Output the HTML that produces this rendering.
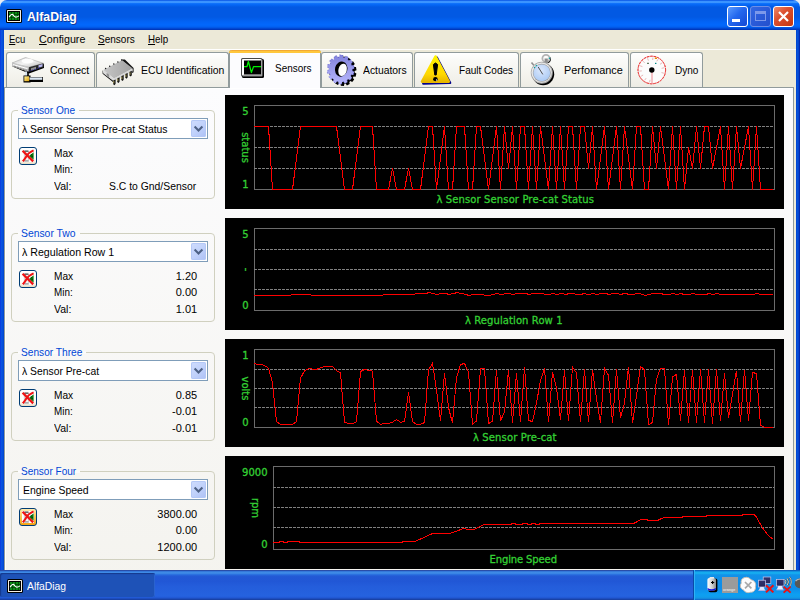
<!DOCTYPE html><html><head><meta charset="utf-8"><title>AlfaDiag</title><style>
*{box-sizing:border-box;margin:0;padding:0}
html,body{width:800px;height:600px;overflow:hidden;background:#ece9d8;font-family:"Liberation Sans",sans-serif;font-size:11px;color:#000}
.abs{position:absolute}
.t{position:absolute;white-space:nowrap;line-height:20px;height:20px;transform-origin:0 50%;display:block}
#title{position:absolute;left:0;top:0;width:800px;height:30px;border-radius:7px 7px 0 0;background:linear-gradient(to bottom,#0046dc 0,#2a84fc 1px,#3d96ff 1.6px,#3a94ff 2.6px,#0a6efa 3.6px,#0466f4 5px,#0259e3 7px,#0259e3 17px,#0264f6 22px,#0268fc 25px,#0260f0 27px,#0046d0 28.6px,#0030b0 30px)}
#corner{position:absolute;left:0;top:0;width:800px;height:8px;background:#e8ecf4}
#lframe{position:absolute;left:0;top:30px;width:4px;height:570px;background:linear-gradient(to right,#0831d9 0,#0c4fe6 1px,#0855dd 2px,#0043cf 4px)}
#rframe{position:absolute;left:796px;top:30px;width:4px;height:570px;background:linear-gradient(to right,#0043cf 0,#0855dd 2px,#0436c0 3px,#001ea0 4px)}
#menubar{position:absolute;left:4px;top:30px;width:792px;height:19px;background:#ece9d8}
#mline{position:absolute;left:4px;top:49px;width:792px;height:1px;background:#fff}
.tab{position:absolute;top:52px;height:36px;border:1px solid #919b9c;border-bottom:none;border-radius:3px 3px 0 0;background:linear-gradient(to bottom,#ffffff 0,#fafaf7 20%,#f3f2ec 70%,#ecebe4 100%);z-index:1}
.tab.sel{top:50px;height:38px;background:#fcfcfe;border-top:none;z-index:3}
.tab.sel:before{content:"";position:absolute;left:-1px;right:-1px;top:0;height:3px;background:linear-gradient(to bottom,#e68b2c 0,#ffc73c 1px,#ffc73c 100%);border-radius:3px 3px 0 0}
#pane{position:absolute;left:4px;top:87px;width:790px;height:520px;border:1px solid #919b9c;box-shadow:inset 1px 1px 0 #fff;background:linear-gradient(to bottom,#fcfcfe 0,#f4f3ee 100%);z-index:2}
.grp{position:absolute;left:11px;width:204px;height:89px;border:1px solid #d0d0bf;border-radius:4px;z-index:4}
.lgbg{position:absolute;z-index:5;height:3px}
.combo{position:absolute;left:18px;width:190px;height:21px;border:1px solid #7f9db9;background:#fff;z-index:5}
.dd{position:absolute;left:191px;width:15px;height:17px;border-radius:2px;background:linear-gradient(135deg,#cfdcfd 0,#c1d2fb 50%,#adc0f5 100%);box-shadow:inset 0 0 0 1px #b4c8f6;z-index:6}
.btn{position:absolute;left:19px;width:18px;height:18px;border:1px solid #003c74;border-radius:3px;background:linear-gradient(to bottom,#fff 0,#fdfcf8 70%,#efe8d6 92%,#e6dcc4 100%);z-index:5}
.chart{position:absolute;left:225px;width:559px;background:#000;z-index:4}
#taskbar{position:absolute;left:0;top:570px;width:800px;height:30px;z-index:10;background:linear-gradient(to bottom,#1f2f86 0,#3165c4 3%,#3682e5 6%,#4490e6 10%,#3883e5 12%,#2b71e0 15%,#2663da 18%,#235bd6 20%,#2258d5 23%,#2157d6 38%,#245ddb 54%,#2562df 86%,#245fdc 89%,#2158d4 92%,#1d4ec0 95%,#1941a5 98%)}
#tbtn{position:absolute;left:0;top:3px;width:155px;height:24px;border-radius:2px;background:#1e52b7;box-shadow:inset 1px 1px 1px #15398c, inset -1px 0 0 #2a63cf}
#tray{position:absolute;left:693px;top:0;width:107px;height:30px;background:linear-gradient(to bottom,#0c59b9 1%,#139ee9 6%,#18b5f2 10%,#139beb 14%,#1290e8 19%,#0d8dea 63%,#0d9ff1 81%,#0f9eed 88%,#119be9 91%,#1392e2 94%,#137ed7 97%,#095bc9 100%);border-left:1px solid #0a4aa8;box-shadow:inset 1px 0 0 #2fb2f5}
.cb{position:absolute;top:6px;width:21px;height:21px;border:1px solid #fff;border-radius:3px}
</style></head><body><div id="corner"></div><div id="title"></div><div id="lframe"></div><div id="rframe"></div><span class="t" style="left:26.50px;top:7px;font-size:13.5px;color:#fff;z-index:6;transform:scaleX(0.9081);text-shadow:1px 1px 0 #0f3a9c;font-weight:bold;">AlfaDiag</span><div class="cb" style="left:727px;background:linear-gradient(135deg,#5c9cff 0,#2468ee 45%,#1448d4 100%)"><div class="abs" style="left:4px;top:12px;width:8px;height:3px;background:#fff"></div></div><div class="cb" style="left:750px;border-color:#6e8ee6;background:linear-gradient(135deg,#3468e2 0,#2a5ad8 50%,#2450cc 100%)"><div class="abs" style="left:4px;top:4px;width:11px;height:10px;border:1px solid #7c98ea;border-top-width:3px"></div></div><div class="cb" style="left:773px;background:linear-gradient(135deg,#ee8a6a 0,#dc5030 40%,#c4360e 100%)"><svg class="abs" style="left:0;top:0" width="19" height="19" viewBox="0 0 19 19"><path d="M5 5 L14 14 M14 5 L5 14" stroke="#fff" stroke-width="2.2"/></svg></div><svg class="abs" style="left:4px;top:6px;z-index:6" width="22" height="20" viewBox="4 6 22 20" ><g transform="translate(6,9)"><rect x="0" y="0" width="16" height="14" rx="1.5" fill="#000"/><rect x="1" y="1" width="14" height="12" rx="0.5" fill="#f4efe4"/><rect x="2" y="2" width="12" height="10" fill="#000"/><rect x="3" y="3" width="10" height="8" fill="#0a8a14"/><path d="M3 5.5H13 M3 8.5H13 M5.5 3V11 M8.5 3V11 M11.5 3V11" stroke="#003c00" stroke-width="1" fill="none" opacity=".75"/><path d="M3.2 8.2 C4.5 5.2 6.5 4.6 7.6 6.6 C8.6 8.4 10.5 8.8 12.8 6.8" stroke="#fff" stroke-width="1.1" fill="none"/></g></svg><div id="menubar"></div><div id="mline"></div><span class="t" style="left:9.40px;top:29px;font-size:11px;color:#000;z-index:6;transform:scaleX(0.8600);"><u>E</u>cu</span><span class="t" style="left:38.75px;top:29px;font-size:11px;color:#000;z-index:6;transform:scaleX(0.9721);"><u>C</u>onfigure</span><span class="t" style="left:97.75px;top:29px;font-size:11px;color:#000;z-index:6;transform:scaleX(0.9118);"><u>S</u>ensors</span><span class="t" style="left:148.10px;top:29px;font-size:11px;color:#000;z-index:6;transform:scaleX(0.8887);"><u>H</u>elp</span><div class="tab" style="left:6px;width:89px"></div><div class="tab" style="left:96px;width:133px"></div><div class="tab sel" style="left:229px;width:92px"></div><div class="tab" style="left:321px;width:92px"></div><div class="tab" style="left:414px;width:105px"></div><div class="tab" style="left:520px;width:109px"></div><div class="tab" style="left:630px;width:73px"></div><span class="t" style="left:49.75px;top:60px;font-size:11px;color:#000;z-index:6;transform:scaleX(0.9593);">Connect</span><span class="t" style="left:140.60px;top:60px;font-size:11px;color:#000;z-index:6;transform:scaleX(0.9457);">ECU Identification</span><span class="t" style="left:275.25px;top:58px;font-size:11px;color:#000;z-index:6;transform:scaleX(0.9057);">Sensors</span><span class="t" style="left:363.10px;top:60px;font-size:11px;color:#000;z-index:6;transform:scaleX(0.9401);">Actuators</span><span class="t" style="left:458.50px;top:60px;font-size:11px;color:#000;z-index:6;transform:scaleX(0.9129);">Fault Codes</span><span class="t" style="left:564.40px;top:60px;font-size:11px;color:#000;z-index:6;transform:scaleX(0.9917);">Perfomance</span><span class="t" style="left:674.75px;top:60px;font-size:11px;color:#000;z-index:6;transform:scaleX(0.9135);">Dyno</span><div id="pane"></div><svg class="abs" style="left:8px;top:54px;z-index:6" width="40" height="32" viewBox="8 54 40 32" ><defs><linearGradient id="dg1" x1="0" y1="0" x2="1" y2="1"><stop offset="0" stop-color="#c8c8c8"/><stop offset=".5" stop-color="#f4f4f4"/><stop offset="1" stop-color="#b8b8b8"/></linearGradient>
<linearGradient id="yg" x1="0" y1="0" x2="1" y2="1"><stop offset="0" stop-color="#fff2a0"/><stop offset="1" stop-color="#e0a000"/></linearGradient></defs>
<path d="M12.5 66.5 L29 73.5 L44 68 L44 64 L29 69 L12.5 63.5Z" fill="#000"/>
<path d="M12 63 L25.5 57.5 L43.5 63.3 L28.8 67.2Z" fill="url(#dg1)" stroke="#9a9a9a" stroke-width=".5"/>
<ellipse cx="27.5" cy="61" rx="6" ry="2.6" fill="#fff" opacity=".9"/>
<path d="M12 63 L28.8 67.2 L28.8 72 L12 66.3Z" fill="#c4c4c4"/>
<path d="M13 64.6 L27.5 68.6" stroke="#fff" stroke-width="1"/>
<path d="M14 66.2 L27 70.4" stroke="#6a6a6a" stroke-width=".8" stroke-dasharray="2 1"/>
<path d="M28.8 67.2 L43.5 63.3 L43.5 67.2 L28.8 72Z" fill="#2a2a2a"/>
<path d="M31 68.2 L36 66.8 L36 69.2 L31 70.6Z" fill="#909090"/>
<path d="M38.5 65.2 L42.5 64 L42.5 66.6 L38.5 67.8Z" fill="#b8b8f0"/>
<path d="M29.5 71 L41 67.4" stroke="#1818c0" stroke-width=".8" stroke-dasharray="1 1.5"/>
<rect x="25" y="71.5" width="2.2" height="5" fill="#d8e4f0"/><rect x="27.2" y="71.5" width="1.6" height="5" fill="#000"/>
<rect x="23.5" y="75.5" width="7" height="7" fill="#000"/>
<rect x="24.3" y="76.3" width="4.9" height="4.9" fill="url(#yg)"/>
<rect x="30" y="77" width="13" height="5" fill="#000"/>
<rect x="29.5" y="77.4" width="12.8" height="2.4" fill="#dce8f4"/></svg><svg class="abs" style="left:98px;top:54px;z-index:6" width="40" height="32" viewBox="98 54 40 32" ><defs><linearGradient id="cg" x1="0" y1="0" x2="1" y2="0"><stop offset="0" stop-color="#c6c6c6"/><stop offset="1" stop-color="#a2a2a2"/></linearGradient></defs>
<path d="M121.3 59.4 L124.9 59.4 L133.6 68 L133.6 72.2 L132 73 L132.2 69 L122 60.6Z" fill="#141414"/>
<path d="M102.6 70 L102.6 73.8 L113.6 82.4 L114.2 81 L103.6 73Z" fill="#141414"/>
<path d="M103.2 70 L122 60.2 L132.7 68.6 L114 78.5Z" fill="url(#cg)"/>
<path d="M103.2 70 L114 78.5 L114 81.6 L103.2 73.3Z" fill="#dadada"/>
<path d="M106.6 72.7 L109.2 74.7 L109.2 77.4 L106.6 75.3Z" fill="#8e8e8e"/>
<path d="M114 78.5 L132.7 68.6 L132.7 71.2 L114 81.4Z" fill="#d6d6d6"/>
<path d="M113.2 80.6 L115.6 79.4 L115.6 83.8 L114.6 85.2 L113.2 84.2Z" fill="#141414"/><path d="M117.2 78.4 L119.6 77.2 L119.6 81.6 L118.6 83.0 L117.2 82.0Z" fill="#141414"/><path d="M121.3 76.3 L123.7 75.1 L123.7 79.5 L122.7 80.9 L121.3 79.9Z" fill="#141414"/><path d="M125.3 74.1 L127.7 72.9 L127.7 77.3 L126.7 78.7 L125.3 77.7Z" fill="#141414"/><path d="M129.4 72.0 L131.8 70.8 L131.8 75.2 L130.8 76.6 L129.4 75.6Z" fill="#141414"/><path d="M113.8 80.9 V83.4" stroke="#e0d070" stroke-width=".7"/><path d="M117.8 78.7 V81.2" stroke="#e0d070" stroke-width=".7"/><path d="M121.9 76.6 V79.1" stroke="#e0d070" stroke-width=".7"/><path d="M125.9 74.4 V76.9" stroke="#e0d070" stroke-width=".7"/><path d="M130.0 72.3 V74.8" stroke="#e0d070" stroke-width=".7"/>
<g fill="#202020"><circle cx="105.6" cy="68.4" r=".75"/><circle cx="109.7" cy="66.2" r=".75"/><circle cx="113.8" cy="64.1" r=".75"/><circle cx="117.9" cy="62" r=".75"/><circle cx="121.6" cy="60" r=".75"/></g></svg><svg class="abs" style="left:236px;top:54px;z-index:6" width="34" height="30" viewBox="236 54 34 30" ><rect x="242" y="59" width="22" height="19" rx="1.5" fill="#000"/>
<rect x="241" y="58" width="21.5" height="18.5" rx="1.5" fill="#484848"/>
<rect x="242" y="59" width="19.5" height="16.5" rx="1" fill="#fff"/>
<path d="M243 75.5 H261.5 V60" stroke="#a0a0a0" stroke-width="1.6" fill="none"/>
<rect x="244" y="60.5" width="17" height="14" fill="#000"/>
<path d="M244 66.5 H247 L248.4 61.5 L251.4 72.5 L253.6 66.5 H261" stroke="#00f000" stroke-width="1.25" fill="none" stroke-linejoin="round"/></svg><svg class="abs" style="left:322px;top:52px;z-index:6" width="40" height="36" viewBox="322 52 40 36" ><defs><linearGradient id="gg" x1="0" y1="0" x2="0" y2="1"><stop offset="0" stop-color="#8282dc"/><stop offset="1" stop-color="#b6b6fc"/></linearGradient></defs><path d="M354.6 72.6 L356.4 73.6 L355.6 76.7 L353.5 76.6 L352.9 77.9 L354.2 79.6 L352.2 82.1 L350.4 81.0 L349.3 81.9 L349.7 84.1 L346.9 85.4 L345.7 83.5 L344.4 83.8 L343.9 86.0 L340.8 85.8 L340.5 83.6 L339.2 83.2 L337.9 85.0 L335.2 83.4 L335.7 81.3 L334.7 80.3 L332.8 81.3 L331.0 78.6 L332.4 77.0 L331.9 75.6 L329.8 75.6 L329.3 72.3 L331.2 71.5 L331.2 70.0 L329.4 69.0 L330.2 65.9 L332.3 66.0 L332.9 64.7 L331.6 63.0 L333.6 60.5 L335.4 61.6 L336.5 60.7 L336.1 58.5 L338.9 57.2 L340.1 59.1 L341.4 58.8 L341.9 56.6 L345.0 56.8 L345.3 59.0 L346.6 59.4 L347.9 57.6 L350.6 59.2 L350.1 61.3 L351.1 62.3 L353.0 61.3 L354.8 64.0 L353.4 65.6 L353.9 67.0 L356.0 67.0 L356.5 70.3 L354.6 71.1Z" fill="#000"/><path d="M352.4 70.8 L354.2 71.8 L353.4 74.9 L351.3 74.8 L350.7 76.1 L352.0 77.8 L350.0 80.3 L348.2 79.2 L347.1 80.1 L347.5 82.3 L344.7 83.6 L343.5 81.7 L342.2 82.0 L341.7 84.2 L338.6 84.0 L338.3 81.8 L337.0 81.4 L335.7 83.2 L333.0 81.6 L333.5 79.5 L332.5 78.5 L330.6 79.5 L328.8 76.8 L330.2 75.2 L329.7 73.8 L327.6 73.8 L327.1 70.5 L329.0 69.7 L329.0 68.2 L327.2 67.2 L328.0 64.1 L330.1 64.2 L330.7 62.9 L329.4 61.2 L331.4 58.7 L333.2 59.8 L334.3 58.9 L333.9 56.7 L336.7 55.4 L337.9 57.3 L339.2 57.0 L339.7 54.8 L342.8 55.0 L343.1 57.2 L344.4 57.6 L345.7 55.8 L348.4 57.4 L347.9 59.5 L348.9 60.5 L350.8 59.5 L352.6 62.2 L351.2 63.8 L351.7 65.2 L353.8 65.2 L354.3 68.5 L352.4 69.3Z" fill="url(#gg)" stroke="#2020a8" stroke-width=".5" stroke-dasharray="1 2.5"/><ellipse cx="341.2" cy="69.1" rx="6.2" ry="7.6" fill="#000" transform="rotate(14 341.2 69.1)"/><ellipse cx="342.6" cy="69.9" rx="4.2" ry="6.3" fill="#fdfdfd" transform="rotate(14 342.6 69.9)"/></svg><svg class="abs" style="left:416px;top:52px;z-index:6" width="40" height="36" viewBox="416 52 40 36" ><defs><linearGradient id="wg" x1="0" y1="0" x2="0" y2="1"><stop offset="0" stop-color="#fff200"/><stop offset=".7" stop-color="#ffd800"/><stop offset="1" stop-color="#e8b800"/></linearGradient></defs>
<path d="M436.7 57.6 L450 82.8 L423.4 83.4Z" fill="#000088" stroke="#000088" stroke-width="2.6" stroke-linejoin="round"/>
<path d="M435.5 56.5 L448.8 81.6 L422 81.6Z" fill="url(#wg)" stroke="url(#wg)" stroke-width="2.6" stroke-linejoin="round"/>
<path d="M433.4 64.5 Q435.5 61.5 437.6 64.5 L436.2 75 H434.8Z" fill="#000" stroke="#000" stroke-width="1" stroke-linejoin="round"/>
<ellipse cx="435.4" cy="79.2" rx="2.3" ry="2.1" fill="#000"/>
<circle cx="436.6" cy="80" r=".7" fill="#e8e8ff"/></svg><svg class="abs" style="left:524px;top:52px;z-index:6" width="36" height="36" viewBox="524 52 36 36" ><defs><radialGradient id="fg" cx=".45" cy=".35" r=".7"><stop offset="0" stop-color="#dce8fc"/><stop offset="1" stop-color="#a8c8f4"/></radialGradient></defs>
<circle cx="543.2" cy="74.2" r="11" fill="#000"/>
<path d="M549.8 57.5 A3.6 3.6 0 0 1 547.5 62.6" fill="none" stroke="#000" stroke-width="1.6"/>
<circle cx="546" cy="58.4" r="3.6" fill="none" stroke="#b4b4b4" stroke-width="1.8"/>
<rect x="544.6" y="58.5" width="3.2" height="4.5" fill="#8c8c8c"/>
<path d="M531.5 62.5 L534 65.5" stroke="#909090" stroke-width="1.6"/>
<circle cx="541.8" cy="72.8" r="11" fill="#a4a4a4"/>
<circle cx="541.6" cy="72.6" r="10.2" fill="#e8e8e8"/>
<circle cx="541.8" cy="72.8" r="9" fill="#9c9c9c"/>
<circle cx="541.8" cy="72.8" r="8.4" fill="url(#fg)"/>
<path d="M538.2 67 L542.8 74.4" stroke="#505050" stroke-width="1"/>
<circle cx="549.5" cy="58.3" r=".8" fill="#00a0a0"/><circle cx="536.3" cy="65.5" r=".7" fill="#00a0a0"/><circle cx="534.5" cy="67.5" r=".7" fill="#00a0a0"/></svg><svg class="abs" style="left:634px;top:52px;z-index:6" width="36" height="36" viewBox="634 52 36 36" ><circle cx="651.8" cy="70" r="13.8" fill="#fcfcfc" stroke="#e40000" stroke-width="1" stroke-dasharray="2.6 0.9"/><circle cx="651.8" cy="70" r="13.8" fill="none" stroke="#f08080" stroke-width="1" opacity=".5"/><path d="M650.1 79.8L649.6 82.2M646.1 78.2L644.7 80.2M643.1 75.0L641.1 76.2M641.8 70.9L639.4 71.1M642.4 66.6L640.1 65.8M644.7 62.9L643.0 61.2M648.4 60.6L647.6 58.3M652.7 60.0L652.9 57.6M656.8 61.3L658.0 59.3M660.0 64.3L662.0 62.9M661.6 68.3L664.0 67.8M661.5 72.6L663.8 73.2" stroke="#d89090" stroke-width=".9" opacity=".7"/><path d="M652 72 V84" stroke="#ee8890" stroke-width="1"/><circle cx="651.8" cy="70" r="2.7" fill="#000"/><rect x="654.8" y="57.6" width="2.2" height="1.4" fill="#e89000"/><rect x="655" y="62.8" width="1.4" height="1.2" fill="#008888"/><rect x="647" y="62.8" width="2" height="1" fill="#406040"/></svg><div class="grp" style="top:110px"></div><div class="lgbg" style="left:18px;top:109px;width:61px;background:#fbfbfb"></div><span class="t" style="left:21.00px;top:100px;font-size:11px;color:#0046d5;z-index:6;transform:scaleX(0.9218);">Sensor One</span><div class="combo" style="top:118px"></div><div class="dd" style="top:120px"><svg width="16" height="17" viewBox="0 0 16 17" style="position:absolute;left:0;top:0"><path d="M3.6 6.6 L7.5 10.5 L11.4 6.6" fill="none" stroke="#4d6185" stroke-width="2.1"/></svg></div><span class="t" style="left:22.00px;top:119px;font-size:11px;color:#000;z-index:6;transform:scaleX(0.9446);">λ Sensor Sensor Pre-cat Status</span><div class="btn" style="top:147px"><svg width="16" height="16" viewBox="0 0 16 16" style="position:absolute;left:0;top:0"><rect x="2" y="2" width="12" height="12" fill="#fff"/><rect x="4.2" y="3.2" width="4.6" height="10" fill="#f4f4f4" stroke="#b4b4b4" stroke-width=".6"/><path d="M4.4 3.1 H8.4" stroke="#222" stroke-width="1"/><path d="M4.6 12.8 H8.4" stroke="#888" stroke-width=".9"/><path d="M13.6 4.2 L9 8 L13.6 11.8Z" fill="#0a7a10"/><path d="M11.2 6.4 L12.6 9.6" stroke="#032c04" stroke-width="1.1" stroke-dasharray="1 .8"/><path d="M2.6 2.8 L13.2 13.4" stroke="#ee1414" stroke-width="2.3"/><path d="M13.6 2.4 Q8.6 4.6 6.6 8 Q5 10.8 2.8 13.4" stroke="#ee1414" stroke-width="2.1" fill="none"/></svg></div><span class="t" style="left:54.40px;top:143px;font-size:11px;color:#000;z-index:6;transform:scaleX(0.9210);">Max</span><span class="t" style="left:54.40px;top:159px;font-size:11px;color:#000;z-index:6;transform:scaleX(0.8975);">Min:</span><span class="t" style="left:54.00px;top:176px;font-size:11px;color:#000;z-index:6;transform:scaleX(0.9540);">Val:</span><span class="t" style="left:109.30px;top:176px;font-size:11px;color:#000;z-index:6;transform:scaleX(0.9438);">S.C to Gnd/Sensor</span><div class="grp" style="top:233px"></div><div class="lgbg" style="left:18px;top:232px;width:62px;background:#fbfbfb"></div><span class="t" style="left:21.00px;top:223px;font-size:11px;color:#0046d5;z-index:6;transform:scaleX(0.9419);">Sensor Two</span><div class="combo" style="top:241px"></div><div class="dd" style="top:243px"><svg width="16" height="17" viewBox="0 0 16 17" style="position:absolute;left:0;top:0"><path d="M3.6 6.6 L7.5 10.5 L11.4 6.6" fill="none" stroke="#4d6185" stroke-width="2.1"/></svg></div><span class="t" style="left:22.00px;top:242px;font-size:11px;color:#000;z-index:6;transform:scaleX(0.9657);">λ Regulation Row 1</span><div class="btn" style="top:270px"><svg width="16" height="16" viewBox="0 0 16 16" style="position:absolute;left:0;top:0"><rect x="2" y="2" width="12" height="12" fill="#fff"/><rect x="4.2" y="3.2" width="4.6" height="10" fill="#f4f4f4" stroke="#b4b4b4" stroke-width=".6"/><path d="M4.4 3.1 H8.4" stroke="#222" stroke-width="1"/><path d="M4.6 12.8 H8.4" stroke="#888" stroke-width=".9"/><path d="M13.6 4.2 L9 8 L13.6 11.8Z" fill="#0a7a10"/><path d="M11.2 6.4 L12.6 9.6" stroke="#032c04" stroke-width="1.1" stroke-dasharray="1 .8"/><path d="M2.6 2.8 L13.2 13.4" stroke="#ee1414" stroke-width="2.3"/><path d="M13.6 2.4 Q8.6 4.6 6.6 8 Q5 10.8 2.8 13.4" stroke="#ee1414" stroke-width="2.1" fill="none"/></svg></div><span class="t" style="left:54.40px;top:266px;font-size:11px;color:#000;z-index:6;transform:scaleX(0.9210);">Max</span><span class="t" style="left:175.71px;top:266px;font-size:11px;color:#000;z-index:6;">1.20</span><span class="t" style="left:54.40px;top:282px;font-size:11px;color:#000;z-index:6;transform:scaleX(0.8975);">Min:</span><span class="t" style="left:175.71px;top:282px;font-size:11px;color:#000;z-index:6;">0.00</span><span class="t" style="left:54.00px;top:299px;font-size:11px;color:#000;z-index:6;transform:scaleX(0.9540);">Val:</span><span class="t" style="left:175.71px;top:299px;font-size:11px;color:#000;z-index:6;">1.01</span><div class="grp" style="top:352px"></div><div class="lgbg" style="left:18px;top:351px;width:68px;background:#fbfbfb"></div><span class="t" style="left:21.00px;top:342px;font-size:11px;color:#0046d5;z-index:6;transform:scaleX(0.9244);">Sensor Three</span><div class="combo" style="top:360px"></div><div class="dd" style="top:362px"><svg width="16" height="17" viewBox="0 0 16 17" style="position:absolute;left:0;top:0"><path d="M3.6 6.6 L7.5 10.5 L11.4 6.6" fill="none" stroke="#4d6185" stroke-width="2.1"/></svg></div><span class="t" style="left:22.00px;top:361px;font-size:11px;color:#000;z-index:6;transform:scaleX(0.9406);">λ Sensor Pre-cat</span><div class="btn" style="top:389px"><svg width="16" height="16" viewBox="0 0 16 16" style="position:absolute;left:0;top:0"><rect x="2" y="2" width="12" height="12" fill="#fff"/><rect x="4.2" y="3.2" width="4.6" height="10" fill="#f4f4f4" stroke="#b4b4b4" stroke-width=".6"/><path d="M4.4 3.1 H8.4" stroke="#222" stroke-width="1"/><path d="M4.6 12.8 H8.4" stroke="#888" stroke-width=".9"/><path d="M13.6 4.2 L9 8 L13.6 11.8Z" fill="#0a7a10"/><path d="M11.2 6.4 L12.6 9.6" stroke="#032c04" stroke-width="1.1" stroke-dasharray="1 .8"/><path d="M2.6 2.8 L13.2 13.4" stroke="#ee1414" stroke-width="2.3"/><path d="M13.6 2.4 Q8.6 4.6 6.6 8 Q5 10.8 2.8 13.4" stroke="#ee1414" stroke-width="2.1" fill="none"/></svg></div><span class="t" style="left:54.40px;top:385px;font-size:11px;color:#000;z-index:6;transform:scaleX(0.9210);">Max</span><span class="t" style="left:175.71px;top:385px;font-size:11px;color:#000;z-index:6;">0.85</span><span class="t" style="left:54.40px;top:401px;font-size:11px;color:#000;z-index:6;transform:scaleX(0.8975);">Min:</span><span class="t" style="left:172.05px;top:401px;font-size:11px;color:#000;z-index:6;">-0.01</span><span class="t" style="left:54.00px;top:418px;font-size:11px;color:#000;z-index:6;transform:scaleX(0.9540);">Val:</span><span class="t" style="left:172.05px;top:418px;font-size:11px;color:#000;z-index:6;">-0.01</span><div class="grp" style="top:471px"></div><div class="lgbg" style="left:18px;top:470px;width:62px;background:#fbfbfb"></div><span class="t" style="left:21.00px;top:461px;font-size:11px;color:#0046d5;z-index:6;transform:scaleX(0.9119);">Sensor Four</span><div class="combo" style="top:479px"></div><div class="dd" style="top:481px"><svg width="16" height="17" viewBox="0 0 16 17" style="position:absolute;left:0;top:0"><path d="M3.6 6.6 L7.5 10.5 L11.4 6.6" fill="none" stroke="#4d6185" stroke-width="2.1"/></svg></div><span class="t" style="left:22.50px;top:480px;font-size:11px;color:#000;z-index:6;transform:scaleX(0.9493);">Engine Speed</span><div class="btn" style="top:508px;background:linear-gradient(to bottom,#ffeeb4 0,#fbc95a 45%,#f4a414 100%)"><svg width="16" height="16" viewBox="0 0 16 16" style="position:absolute;left:0;top:0"><rect x="2" y="2" width="12" height="12" fill="#fff"/><rect x="4.2" y="3.2" width="4.6" height="10" fill="#f4f4f4" stroke="#b4b4b4" stroke-width=".6"/><path d="M4.4 3.1 H8.4" stroke="#222" stroke-width="1"/><path d="M4.6 12.8 H8.4" stroke="#888" stroke-width=".9"/><path d="M13.6 4.2 L9 8 L13.6 11.8Z" fill="#0a7a10"/><path d="M11.2 6.4 L12.6 9.6" stroke="#032c04" stroke-width="1.1" stroke-dasharray="1 .8"/><path d="M2.6 2.8 L13.2 13.4" stroke="#ee1414" stroke-width="2.3"/><path d="M13.6 2.4 Q8.6 4.6 6.6 8 Q5 10.8 2.8 13.4" stroke="#ee1414" stroke-width="2.1" fill="none"/></svg></div><span class="t" style="left:54.40px;top:504px;font-size:11px;color:#000;z-index:6;transform:scaleX(0.9210);">Max</span><span class="t" style="left:157.36px;top:504px;font-size:11px;color:#000;z-index:6;">3800.00</span><span class="t" style="left:54.40px;top:520px;font-size:11px;color:#000;z-index:6;transform:scaleX(0.8975);">Min:</span><span class="t" style="left:175.71px;top:520px;font-size:11px;color:#000;z-index:6;">0.00</span><span class="t" style="left:54.00px;top:537px;font-size:11px;color:#000;z-index:6;transform:scaleX(0.9540);">Val:</span><span class="t" style="left:157.36px;top:537px;font-size:11px;color:#000;z-index:6;">1200.00</span><div class="chart" style="top:95px;height:114px"><svg width="559" height="114" viewBox="225 95 559 114" style="position:absolute;left:0;top:0" shape-rendering="crispEdges"><rect x="254.5" y="105.5" width="520" height="84" fill="none" stroke="#6b6b6b" stroke-width="1"/><line x1="254" x2="774" y1="126.5" y2="126.5" stroke="#808080" stroke-width="1" stroke-dasharray="3 1"/><line x1="254" x2="774" y1="147.5" y2="147.5" stroke="#808080" stroke-width="1" stroke-dasharray="3 1"/><line x1="254" x2="774" y1="168.5" y2="168.5" stroke="#808080" stroke-width="1" stroke-dasharray="3 1"/><polyline points="254,126.5 268.5,126.5 272.5,189.5 292.5,189.5 300.5,126.5 336.5,126.5 344.5,189.5 352.5,189.5 360.5,126.5 372.5,126.5 376.5,189.5 388.5,189.5 392.5,168.5 396.5,189.5 404.5,189.5 408.5,168.5 412.5,189.5 420.5,189.5 428.5,126.5 432.5,126.5 436.5,189.5 444.5,126.5 448.5,189.5 452.5,189.5 456.5,126.5 464.5,126.5 468.5,189.5 472.5,189.5 476.5,126.5 480.5,126.5 488.5,189.5 496.5,126.5 500.5,189.5 504.5,126.5 508.5,168.5 512.5,126.5 516.5,189.5 520.5,126.5 524.5,126.5 528.5,189.5 532.5,126.5 536.5,189.5 540.5,126.5 548.5,189.5 552.5,126.5 556.5,189.5 560.5,126.5 564.5,189.5 568.5,126.5 572.5,126.5 576.5,189.5 580.5,126.5 584.5,126.5 588.5,168.5 592.5,126.5 596.5,189.5 604.5,126.5 608.5,189.5 616.5,126.5 620.5,189.5 624.5,126.5 632.5,189.5 636.5,126.5 640.5,126.5 644.5,189.5 648.5,189.5 652.5,126.5 656.5,168.5 660.5,126.5 668.5,189.5 672.5,126.5 676.5,189.5 680.5,126.5 684.5,189.5 688.5,147.5 692.5,168.5 696.5,126.5 700.5,168.5 704.5,126.5 708.5,126.5 712.5,168.5 720.5,126.5 724.5,189.5 728.5,126.5 732.5,189.5 736.5,126.5 740.5,168.5 748.5,126.5 752.5,189.5 756.5,126.5 760.5,189.5 773,189.5" fill="none" stroke="#ff0000" stroke-width="1" stroke-linejoin="miter"/><g shape-rendering="auto" font-family="'DejaVu Sans',sans-serif" font-size="10" fill="#34d034" stroke="#34d034" stroke-width="0.3"><text x="436.5" y="203" textLength="157.5" lengthAdjust="spacing">λ Sensor Sensor Pre-cat Status</text><text x="248.5" y="115" text-anchor="end">5</text><text x="248.5" y="188" text-anchor="end">1</text><text transform="translate(241.5,147.5) rotate(90)" text-anchor="middle">status</text></g></svg></div><div class="chart" style="top:218px;height:112px"><svg width="559" height="112" viewBox="225 218 559 112" style="position:absolute;left:0;top:0" shape-rendering="crispEdges"><rect x="254.5" y="228.5" width="520" height="82" fill="none" stroke="#6b6b6b" stroke-width="1"/><line x1="254" x2="774" y1="249.5" y2="249.5" stroke="#808080" stroke-width="1" stroke-dasharray="3 1"/><line x1="254" x2="774" y1="269.5" y2="269.5" stroke="#808080" stroke-width="1" stroke-dasharray="3 1"/><line x1="254" x2="774" y1="289.5" y2="289.5" stroke="#808080" stroke-width="1" stroke-dasharray="3 1"/><polyline points="254,295.5 289.5,295.5 292.5,294.5 309.5,294.5 312.5,295.5 381.5,295.5 384.5,294.5 413.5,294.5 416.5,293.5 426,293.5 429,292.5 429.5,292.5 432.5,293.5 433.5,293.5 436.5,294.5 437.5,294.5 440.5,293.5 446,293.5 449,294.5 449.5,294.5 452.5,293.5 454,293.5 457,292.5 457.5,292.5 460.5,293.5 462.5,293.5 465.5,294.5 466,294.5 469,295.5 469.5,295.5 472.5,294.5 482.5,294.5 485.5,295.5 489.5,295.5 492.5,294.5 493.5,294.5 496.5,293.5 497.5,293.5 500.5,294.5 502.5,294.5 505.5,293.5 509.5,293.5 512.5,294.5 513.5,294.5 516.5,293.5 526,293.5 529,294.5 529.5,294.5 532.5,293.5 542.5,293.5 545.5,294.5 549.5,294.5 552.5,293.5 553.5,293.5 556.5,294.5 557.5,294.5 560.5,293.5 562.5,293.5 565.5,294.5 566,294.5 569,293.5 573.5,293.5 576.5,294.5 581,294.5 584,293.5 584.5,293.5 587.5,294.5 589.5,294.5 592.5,293.5 593.5,293.5 596.5,294.5 597.5,294.5 600.5,293.5 606,293.5 609,294.5 609.5,294.5 612.5,293.5 617.5,293.5 620.5,294.5 621,294.5 624,293.5 626,293.5 629,294.5 633.5,294.5 636.5,293.5 639.5,293.5 642.5,294.5 642.5,294.5 645.5,295.5 645.5,295.5 648.5,294.5 649.5,294.5 652.5,293.5 661,293.5 664,294.5 669.5,294.5 672.5,293.5 673.5,293.5 676.5,294.5 677.5,294.5 680.5,293.5 681,293.5 684,294.5 689.5,294.5 692.5,293.5 693.5,293.5 696.5,294.5 706,294.5 709,293.5 709.5,293.5 712.5,294.5 713.5,294.5 716.5,293.5 717.5,293.5 720.5,294.5 753.5,294.5 756.5,293.5 757.5,293.5 760.5,294.5 773,294.5" fill="none" stroke="#ff0000" stroke-width="1" stroke-linejoin="miter"/><g shape-rendering="auto" font-family="'DejaVu Sans',sans-serif" font-size="10" fill="#34d034" stroke="#34d034" stroke-width="0.3"><text x="465" y="324" textLength="97.5" lengthAdjust="spacing">λ Regulation Row 1</text><text x="248.5" y="238" text-anchor="end">5</text><text x="248.5" y="309" text-anchor="end">0</text><text transform="translate(243,269.5) rotate(90)" text-anchor="middle">-</text></g></svg></div><div class="chart" style="top:339px;height:108px"><svg width="559" height="108" viewBox="225 339 559 108" style="position:absolute;left:0;top:0" shape-rendering="crispEdges"><rect x="254.5" y="349.5" width="520" height="78" fill="none" stroke="#6b6b6b" stroke-width="1"/><line x1="254" x2="774" y1="369.5" y2="369.5" stroke="#808080" stroke-width="1" stroke-dasharray="3 1"/><line x1="254" x2="774" y1="388.5" y2="388.5" stroke="#808080" stroke-width="1" stroke-dasharray="3 1"/><line x1="254" x2="774" y1="407.5" y2="407.5" stroke="#808080" stroke-width="1" stroke-dasharray="3 1"/><polyline points="254,363.3 256.5,364.3 260.5,364.3 264.5,365.5 268.5,368.2 272.5,382.75 276.5,421.75 280.5,424.4 284.5,424.75 288.5,424.75 292.5,424.4 296.5,421.75 300.5,378.25 304.5,370.75 308.5,368.8 310.3,368.2 312.5,369.5 316.5,369.5 320.5,367.75 324.5,366.5 328.5,366.25 332.5,366.25 336.5,370.75 340.5,373 344.5,422.2 348.5,423.5 352.5,423.5 356.5,421.75 360.5,371.5 364.5,369.5 368.5,370.3 372.5,371.2 376.5,421 380.5,424.4 384.5,423.5 388.5,423.5 392.5,422.2 396.5,419.5 400.5,422.2 404.5,421.75 408.5,392.2 412.5,421.75 416.5,424.4 420.5,424.4 424.5,422.5 428.5,370 432.5,363.25 436.5,390 440.5,421 444.5,373.5 448.5,407.5 452.5,423.25 456.5,377.5 460.5,364.75 464.5,363.25 468.5,372.25 472.5,424.4 476.5,421 480.5,368.5 484.5,368.5 488.5,423.5 492.5,421.3 496.5,370 500.5,421 504.5,412 508.5,370 512.5,422.5 516.5,373.5 520.5,422.2 524.5,367.3 528.5,420.25 532.5,421.75 536.5,403 540.5,380.5 544.5,368.5 548.5,422.2 552.5,372.25 556.5,388 560.5,419.5 564.5,370 568.5,421.3 572.5,367 576.5,373 580.5,422.2 584.5,369.25 588.5,422.2 592.5,369.7 596.5,398.5 600.5,422.5 604.5,368.2 608.5,375.25 612.5,423.25 616.5,369.25 620.5,418 624.5,403 628.5,367 632.5,423.25 636.5,395.5 640.5,366.25 644.5,370 648.5,424.75 652.5,422.5 656.5,379 660.5,368.5 664.5,368.5 668.5,424.75 672.5,376.75 676.5,374.5 680.5,420.5 684.5,370 688.5,422.5 692.5,370 696.5,422.5 700.5,369.25 704.5,422.5 708.5,369.25 712.5,423.5 716.5,369.25 720.5,421.3 724.5,373.5 728.5,417.5 732.5,394 736.5,370.75 740.5,422.2 744.5,369.7 748.5,420.5 752.5,372.25 756.5,373.75 760.5,425.2 764.5,427.5 773,427.5" fill="none" stroke="#ff0000" stroke-width="1" stroke-linejoin="miter"/><g shape-rendering="auto" font-family="'DejaVu Sans',sans-serif" font-size="10" fill="#34d034" stroke="#34d034" stroke-width="0.3"><text x="473" y="441" textLength="83.5" lengthAdjust="spacing">λ Sensor Pre-cat</text><text x="248.5" y="359" text-anchor="end">1</text><text x="248.5" y="426" text-anchor="end">0</text><text transform="translate(241.5,388.5) rotate(90)" text-anchor="middle">volts</text></g></svg></div><div class="chart" style="top:456px;height:113px"><svg width="559" height="113" viewBox="225 456 559 113" style="position:absolute;left:0;top:0" shape-rendering="crispEdges"><rect x="273.5" y="466.5" width="501" height="83" fill="none" stroke="#6b6b6b" stroke-width="1"/><line x1="273" x2="774" y1="487.5" y2="487.5" stroke="#808080" stroke-width="1" stroke-dasharray="3 1"/><line x1="273" x2="774" y1="507.5" y2="507.5" stroke="#808080" stroke-width="1" stroke-dasharray="3 1"/><line x1="273" x2="774" y1="527.5" y2="527.5" stroke="#808080" stroke-width="1" stroke-dasharray="3 1"/><polyline points="273,542.5 279,542.5 280,541.5 283,541.5 284,542.5 287,542.5 288,541.5 299,541.5 300,542.5 402,542.5 403,541.5 415,541.5 432.5,533.5 450,533.5 463.75,528.5 467.5,529.5 473.75,529.5 483.75,524.5 511,524.5 512,523.5 515,523.5 516,524.5 522,524.5 523,523.5 527,523.5 528,524.5 531,524.5 532,523.5 535,523.5 536,524.5 539,524.5 540,523.5 633.75,523.5 641,519.5 646,519.5 649,520.5 657.5,520.5 663.75,517.5 682,517.5 683,516.5 706,516.5 707,515.5 742,515.5 743,514.5 753.75,514.5 756,516.5 762.5,528 768.75,536 773,539" fill="none" stroke="#ff0000" stroke-width="1" stroke-linejoin="miter"/><g shape-rendering="auto" font-family="'DejaVu Sans',sans-serif" font-size="10" fill="#34d034" stroke="#34d034" stroke-width="0.3"><text x="489.5" y="563" textLength="67.5" lengthAdjust="spacing">Engine Speed</text><text x="267.5" y="476" text-anchor="end">9000</text><text x="267.5" y="548" text-anchor="end">0</text><text transform="translate(252,508.0) rotate(90)" text-anchor="middle">rpm</text></g></svg></div><div id="taskbar"><div id="tbtn"></div><div id="tray"></div></div><svg class="abs" style="left:5px;top:577px;z-index:12" width="22" height="20" viewBox="5 577 22 20" ><g transform="translate(7,579)"><rect x="0" y="0" width="16" height="14" rx="1.5" fill="#000"/><rect x="1" y="1" width="14" height="12" rx="0.5" fill="#f4efe4"/><rect x="2" y="2" width="12" height="10" fill="#000"/><rect x="3" y="3" width="10" height="8" fill="#0a8a14"/><path d="M3 5.5H13 M3 8.5H13 M5.5 3V11 M8.5 3V11 M11.5 3V11" stroke="#003c00" stroke-width="1" fill="none" opacity=".75"/><path d="M3.2 8.2 C4.5 5.2 6.5 4.6 7.6 6.6 C8.6 8.4 10.5 8.8 12.8 6.8" stroke="#fff" stroke-width="1.1" fill="none"/></g></svg><svg class="abs" style="left:700px;top:572px;z-index:12" width="100" height="26" viewBox="700 572 100 26" ><defs><linearGradient id="bg1" x1="0" y1="0" x2="1" y2="0"><stop offset="0" stop-color="#ffffff"/><stop offset=".55" stop-color="#d0d0d0"/><stop offset="1" stop-color="#8c8c8c"/></linearGradient>
<linearGradient id="scr" x1="0" y1="0" x2="0" y2="1"><stop offset="0" stop-color="#34346e"/><stop offset="1" stop-color="#26265a"/></linearGradient></defs>
<rect x="708.4" y="578.6" width="9" height="13.6" rx="2" fill="#000"/>
<rect x="707.4" y="578" width="8.6" height="12.6" rx="1.8" fill="url(#bg1)"/>
<rect x="709.6" y="577" width="4.4" height="1.6" fill="#e8e8e8"/>
<path d="M707.6 588 Q711.6 590.4 715.8 588 V589.6 Q711.6 592 707.6 589.6Z" fill="#1010e0"/>
<path d="M711 582.5 H714.2 M712.6 581 V584" stroke="#000" stroke-width="1.1"/>
<rect x="722" y="577" width="16" height="16" fill="#9b9b9b"/>
<text x="723" y="591.3" font-family="'Liberation Sans',sans-serif" font-size="4.3" font-weight="bold" fill="#e4e4e4" textLength="12.4" lengthAdjust="spacingAndGlyphs">orange</text>
<path d="M744.5 577.6 C747.5 576.6 750 578.2 751.4 580 C754.6 580.4 756.4 583.6 755.4 586.6 C756 590 753.4 592.6 750.4 592.2 C747.4 593.4 744.6 592 743.4 589.8 C740.4 589 739.6 585.6 741.2 583.2 C740.6 580.4 742 578.2 744.5 577.6Z" fill="#fcfcfc" stroke="#c8beb4" stroke-width="1"/>
<path d="M745 582 L751.4 588.4 M751.4 582 L745 588.4" stroke="#a8a8a8" stroke-width="1.7"/>
<rect x="763.2" y="577" width="7.6" height="6.6" fill="url(#scr)" stroke="#c8c8f0" stroke-width=".7"/>
<rect x="758.4" y="580.2" width="7" height="6.8" fill="url(#scr)" stroke="#c8c8f0" stroke-width=".7"/>
<path d="M760.4 587 H763.6 L765.2 590.6 H758.6Z" fill="#e4e4fa"/><path d="M758.4 590.4 H765.4" stroke="#b0b0e0" stroke-width="1"/>
<path d="M766 585.2 L773.4 592.4 M773.4 585.2 L766 592.4" stroke="#ee1010" stroke-width="2"/>
<rect x="776.4" y="579.4" width="7.6" height="6.6" fill="url(#scr)" stroke="#c8c8f0" stroke-width=".7"/>
<path d="M778.4 586 H781.8 L783.4 589.8 H776.6Z" fill="#e8e8fa"/><path d="M776.4 589.8 H783.6" stroke="#b0b0e0" stroke-width="1"/>
<path d="M785 579.6 Q786.8 581.8 785 584.2 M787.2 578.4 Q789.8 581.8 787.2 585.4 M789.6 577.2 Q793 581.8 789.6 586.6" fill="none" stroke="#3c3c3c" stroke-width="1.5"/>
<path d="M785 579.6 Q786.8 581.8 785 584.2 M787.2 578.4 Q789.8 581.8 787.2 585.4 M789.6 577.2 Q793 581.8 789.6 586.6" fill="none" stroke="#f4f0e0" stroke-width=".8"/>
<path d="M783.6 586.6 L790.6 592.6 M790.6 586.6 L783.6 592.6" stroke="#ee1010" stroke-width="1.9"/>
<circle cx="799.6" cy="583.4" r="4.8" fill="#585858"/><path d="M795.6 581 Q797.5 579 800 579" stroke="#b8b8b8" stroke-width="1.2" fill="none"/></svg><span class="t" style="left:27.00px;top:576px;font-size:11px;color:#fff;z-index:12;transform:scaleX(0.9407);">AlfaDiag</span></body></html>
